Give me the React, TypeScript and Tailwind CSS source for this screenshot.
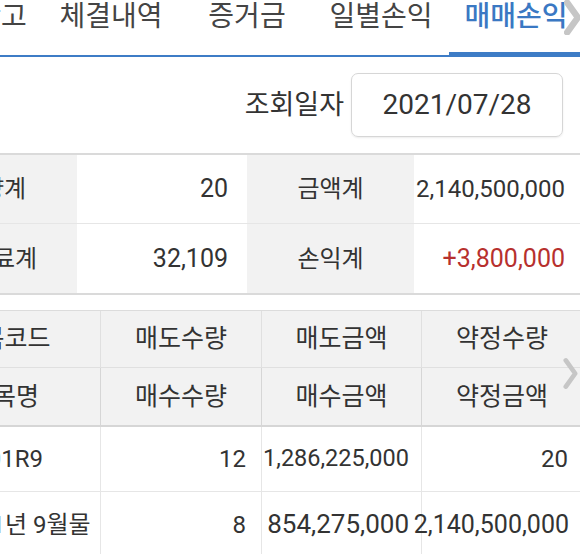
import React from "react";

const font = { fontFamily: 'Roboto, "Noto Sans CJK KR", sans-serif' };

function Chevron({ className, w }: { className: string; w: number }) {
  return (
    <svg className={className} viewBox="0 0 16 32" fill="none">
      <path d="M3 2 L13 16 L3 30" stroke="#c6c6c6" strokeWidth={w} strokeLinecap="round" strokeLinejoin="round" />
    </svg>
  );
}

export default function App() {
  return (
    <div className="relative w-[580px] h-[554px] overflow-hidden bg-white text-[#333]" style={font}>
      <div className="ml-[-91px] w-[673px]">
        {/* Tabs */}
        <div className="flex h-[52px] items-start whitespace-nowrap text-[28px] leading-[34px] text-[#444]">
          <div className="ml-[37px] w-[110px] shrink-0 flex justify-center">잔고</div>
          <div className="w-[110px] shrink-0 flex justify-center">체결내역</div>
          <div className="w-[162px] shrink-0 flex justify-center">증거금</div>
          <div className="w-[106px] shrink-0 flex justify-center">일별손익</div>
          <div className="w-[164px] shrink-0 flex justify-center font-medium text-[#3a78c3]">매매손익</div>
        </div>
        <div className="flex items-end h-[5px]">
          <div className="flex-1 h-[2px] bg-[#3d7cc6]" />
          <div className="w-[133px] h-[5px] bg-[#3d7cc6]" />
        </div>

        {/* Date row */}
        <div className="flex justify-end items-center gap-[7px] pr-[19px] mt-[16px]">
          <div className="text-[27px] leading-[34px]">조회일자</div>
          <div className="w-[212px] h-[64px] rounded-[7px] border border-[#d6d6d6] flex items-center justify-center text-[28px] shadow-[0_1px_2px_rgba(0,0,0,0.08)]">
            2021/07/28
          </div>
        </div>

        {/* Summary */}
        <div className="mt-[16px] border-t-2 border-b-2 border-[#dadada] grid grid-cols-[168px_170px_167px_168px] text-[24px]">
          <div className="h-[69px] bg-[#f2f2f2] flex items-center justify-center border-b border-[#e6e6e6]">수량계</div>
          <div className="h-[69px] flex items-center justify-end pr-[19px] text-[25px] border-b border-[#e6e6e6]">20</div>
          <div className="h-[69px] bg-[#f2f2f2] flex items-center justify-center border-b border-[#e6e6e6]">금액계</div>
          <div className="h-[69px] flex items-center justify-end pr-[17px] text-[24px] border-b border-[#e6e6e6]">2,140,500,000</div>
          <div className="h-[69px] bg-[#f2f2f2] flex items-center justify-center">수수료계</div>
          <div className="h-[69px] flex items-center justify-end pr-[19px] text-[25px]">32,109</div>
          <div className="h-[69px] bg-[#f2f2f2] flex items-center justify-center">손익계</div>
          <div className="h-[69px] flex items-center justify-end pr-[17px] text-[25px] text-[#b7302e]">+3,800,000</div>
        </div>

        {/* Detail table */}
        <div className="mt-[15px] border-t border-[#dcdcdc] grid grid-cols-[192px_161px_160px_160px] text-[25px]">
          <div className="h-[57px] bg-[#f2f2f2] flex items-center justify-center border-r border-b border-[#e0e0e0]">종목코드</div>
          <div className="h-[57px] bg-[#f2f2f2] flex items-center justify-center border-r border-b border-[#e0e0e0]">매도수량</div>
          <div className="h-[57px] bg-[#f2f2f2] flex items-center justify-center border-r border-b border-[#e0e0e0]">매도금액</div>
          <div className="h-[57px] bg-[#f2f2f2] flex items-center justify-center border-b border-[#e0e0e0]">약정수량</div>

          <div className="h-[59px] bg-[#f2f2f2] flex items-center justify-center border-r border-b-2 border-[#d6d6d6]">종목명</div>
          <div className="h-[59px] bg-[#f2f2f2] flex items-center justify-center border-r border-b-2 border-[#d6d6d6]">매수수량</div>
          <div className="h-[59px] bg-[#f2f2f2] flex items-center justify-center border-r border-b-2 border-[#d6d6d6]">매수금액</div>
          <div className="h-[59px] bg-[#f2f2f2] flex items-center justify-center border-b-2 border-[#d6d6d6]">약정금액</div>

          <div className="h-[65px] flex items-center pl-[22px] text-[24px] whitespace-nowrap border-r border-b border-[#e6e6e6]">KR4101R9</div>
          <div className="h-[65px] flex items-center justify-end pr-[15px] text-[24px] border-r border-b border-[#e6e6e6]">12</div>
          <div className="h-[65px] flex items-center justify-end pr-[12px] text-[23.5px] whitespace-nowrap border-r border-b border-[#e6e6e6]">1,286,225,000</div>
          <div className="h-[65px] flex items-center justify-end pr-[14px] text-[24px] border-b border-[#e6e6e6]">20</div>

          <div className="h-[65px] flex items-center pl-[42px] text-[24px] whitespace-nowrap border-r border-[#e6e6e6]">2021년 9월물</div>
          <div className="h-[65px] flex items-center justify-end pr-[15px] text-[24px] border-r border-[#e6e6e6]">8</div>
          <div className="h-[65px] flex items-center justify-end pr-[12px] text-[26px] whitespace-nowrap border-r border-[#e6e6e6]">854,275,000</div>
          <div className="h-[65px] flex items-center justify-end pr-[13px] text-[25px] whitespace-nowrap">2,140,500,000</div>
        </div>
      </div>

      <Chevron className="absolute left-[564px] top-[0px] w-[17px] h-[35px]" w={6} />
      <Chevron className="absolute left-[563px] top-[357px] w-[15px] h-[33px]" w={5} />
    </div>
  );
}
